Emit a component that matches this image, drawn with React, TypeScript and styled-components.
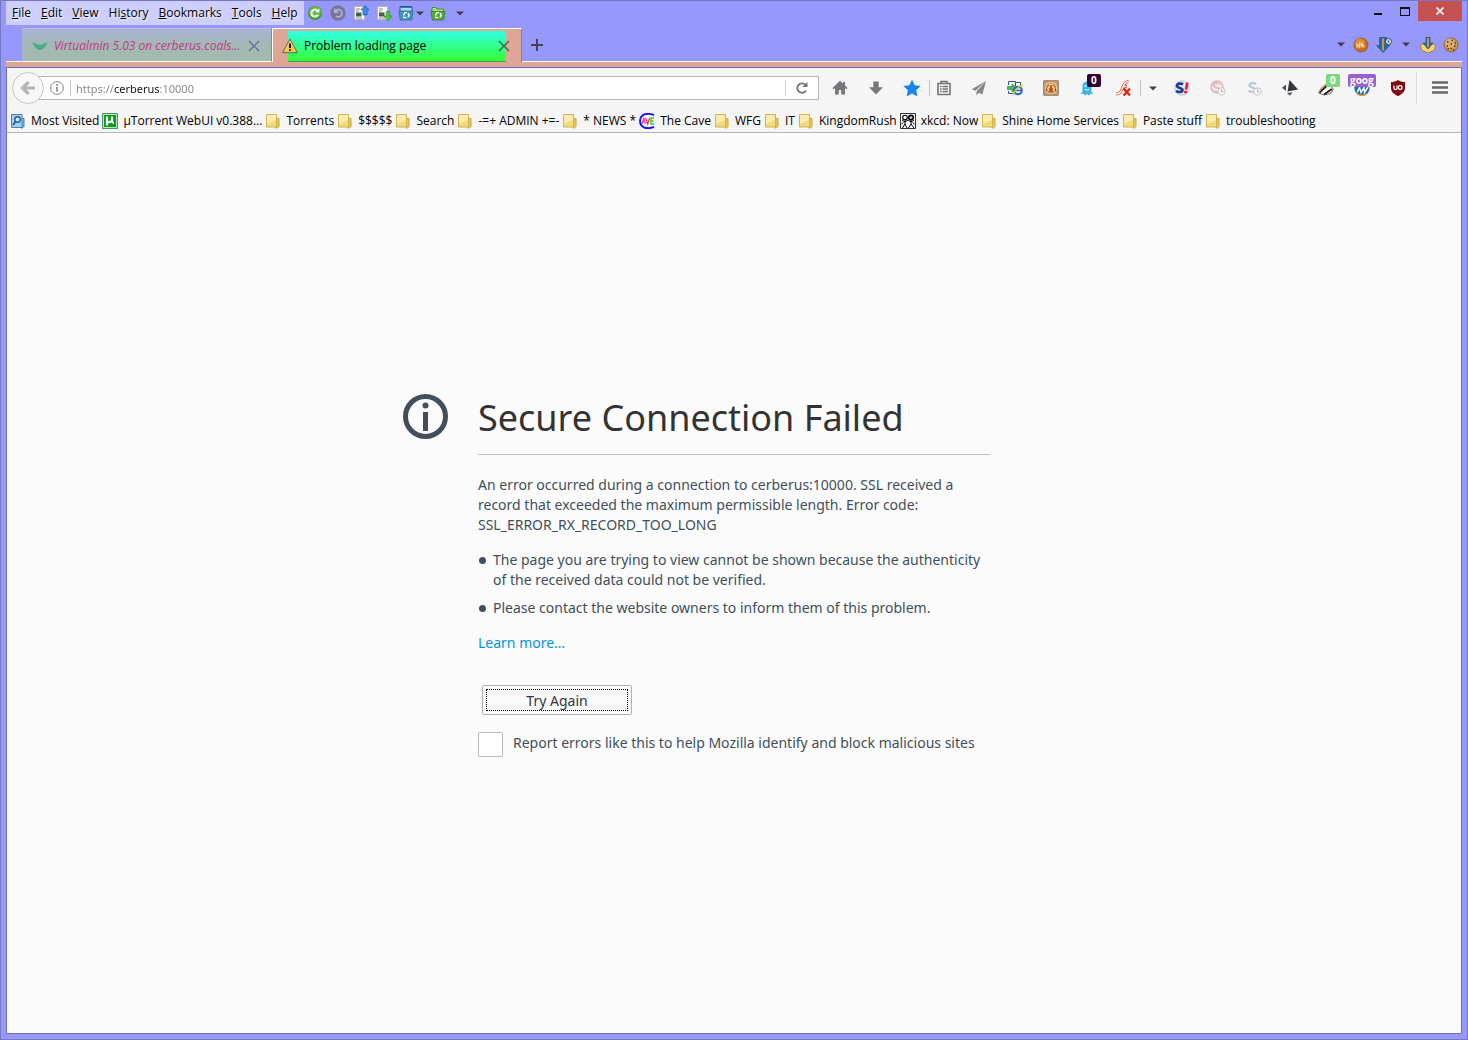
import React from "react";
import styled, { createGlobalStyle } from "styled-components";

const Global = createGlobalStyle`
  * { box-sizing: border-box; }
  html, body { margin: 0; }
  body {
    font-family: "Open Sans", "Noto Sans", sans-serif;
    font-size: 12px;
    line-height: 16px;
    color: #000;
    background: #9698fc;
  }
  button, input { font: inherit; color: inherit; margin: 0; padding: 0; }
  button { border: 0; background: none; cursor: default; }
  svg { display: block; flex: none; }
`;

const Window = styled.div`
  min-height: 100vh;
  display: flex;
  flex-direction: column;
  padding: 0 5px 5px;
  border: 1px solid #7478c0;
  background: #9698fc;
`;

/* ---------- title bar ---------- */

const TitleBar = styled.header`
  display: flex;
  align-items: flex-start;
  height: 27px;
`;

const MenuBar = styled.nav`
  display: flex;
  align-items: center;
  height: 24px;
  padding: 0 1px;
  background: #cdcefb;
`;

const MenuItem = styled.button`
  padding: 0 5px;
  text-shadow: 1px 1px 2px #fff;
`;

const TitleTools = styled.div`
  display: flex;
  align-items: center;
  height: 24px;
  flex: 1;
`;

const Tool = styled.button<{ $w: number }>`
  width: ${(p) => p.$w}px;
  height: 24px;
  display: flex;
  align-items: center;
  justify-content: center;
`;

const Caption = styled.button<{ $close?: boolean }>`
  display: flex;
  align-items: center;
  justify-content: center;
  width: ${(p) => (p.$close ? 44 : 27)}px;
  height: 20px;
  background: ${(p) => (p.$close ? "#c75050" : "transparent")};
`;

/* ---------- tabs ---------- */

const TabStrip = styled.div`
  display: flex;
  align-items: stretch;
  height: 34px;
`;

const StripEdge = styled.div<{ $grow?: boolean }>`
  width: 16px;
  flex: ${(p) => (p.$grow ? "1" : "none")};
  display: flex;
  align-items: center;
  justify-content: ${(p) => (p.$grow ? "flex-end" : "flex-start")};
  border-bottom: 1px solid #fff;
`;

const Tab = styled.div<{ $active?: boolean }>`
  display: flex;
  width: 250px;
  background: ${(p) => (p.$active ? "#dfa595" : "linear-gradient(#aab4d6, #a3b8b4 50%, #a2bbae)")};
  border-top: 1px solid ${(p) => (p.$active ? "#fff" : "#b9bce4")};
  border-left: 1px solid ${(p) => (p.$active ? "#fff" : "#a9b3cf")};
  border-right: 1px solid ${(p) => (p.$active ? "#8a7a90" : "#7f86a8")};
  border-bottom: ${(p) => (p.$active ? "0" : "1px solid #fff")};
  padding: ${(p) => (p.$active ? "2px 15px 0 15px" : "0")};
`;

const TabFace = styled.div<{ $active?: boolean }>`
  flex: 1;
  min-width: 0;
  display: flex;
  align-items: center;
  height: ${(p) => (p.$active ? 31 : 33)}px;
  background: ${(p) => (p.$active ? "linear-gradient(#33ffe8, #33ff33)" : "none")};
  border-bottom: ${(p) => (p.$active ? "1px solid #4a9a5a" : "0")};
`;

const TabIcon = styled.span<{ $active?: boolean }>`
  width: 16px;
  flex: none;
  margin: ${(p) => (p.$active ? "0 6px 0 -6px" : "0 6px 0 9px")};
`;

const TabLabel = styled.span<{ $active?: boolean }>`
  flex: 1;
  white-space: nowrap;
  color: ${(p) => (p.$active ? "#000" : "#c03a86")};
  font-style: ${(p) => (p.$active ? "normal" : "italic")};
`;

const TabClose = styled.button<{ $active?: boolean }>`
  margin-right: ${(p) => (p.$active ? -6 : 9)}px;
`;

const AccentLine = styled.div`
  height: 6px;
  background: #dfa595;
  border-bottom: 1px solid #6a70b0;
`;

/* ---------- navigation ---------- */

const Client = styled.div`
  flex: 1;
  display: flex;
  flex-direction: column;
  background: #fbfbfb;
  border: 1px solid #6a70b0;
  border-top: 0;
`;

const Toolbars = styled.div`
  background: #f5f5f5;
  border-bottom: 1px solid #b6b6b6;
  height: 65px;
`;

const NavBar = styled.div`
  display: flex;
  align-items: center;
  height: 40px;
  padding: 0 3px 0 5px;
`;

const Back = styled.button`
  position: relative;
  z-index: 1;
  flex: none;
  display: flex;
  align-items: center;
  justify-content: center;
  width: 32px;
  height: 32px;
  border-radius: 50%;
  border: 1px solid #c8c8ca;
  background: #f7f7f7;
`;

const UrlBar = styled.div`
  flex: 1;
  display: flex;
  align-items: center;
  height: 24px;
  margin: 0 3px 0 -5px;
  padding-left: 9px;
  background: #fff;
  border: 1px solid #b2b7bd;
`;

const UrlDivider = styled.span`
  width: 1px;
  height: 16px;
  margin: 0 5px;
  background: #c9c9c9;
`;

const UrlInput = styled.input`
  flex: 1;
  min-width: 0;
  border: 0;
  outline: 0;
  height: 20px;
  font-family: "Noto Sans", "Open Sans", sans-serif;
  font-size: 11px;
  color: transparent;
  background: linear-gradient(90deg, #858585 38px, #111 38px, #111 84px, #858585 84px);
  background-clip: text;
  -webkit-background-clip: text;
`;

const Reload = styled.button`
  width: 33px;
  height: 16px;
  display: flex;
  align-items: center;
  justify-content: center;
  border-left: 1px solid #d4d4d4;
`;

const NavButton = styled.button<{ $w?: number; $spaced?: boolean }>`
  position: relative;
  flex: none;
  width: ${(p) => p.$w ?? 36}px;
  height: 32px;
  margin-right: ${(p) => (p.$spaced ? 4 : 0)}px;
  display: flex;
  align-items: center;
  justify-content: center;
`;

const Rule = styled.span<{ $tall?: boolean }>`
  width: 1px;
  flex: none;
  height: ${(p) => (p.$tall ? 32 : 16)}px;
  margin: ${(p) => (p.$tall ? "0 5px 0 0" : "0 0 0 -1px")};
  background: ${(p) => (p.$tall ? "#dcdcdc" : "#c4c4c4")};
`;

const Badge = styled.span<{ $bg: string; $centered?: boolean }>`
  position: absolute;
  top: 2px;
  left: ${(p) => (p.$centered ? "4px" : "50%")};
  padding: 0 ${(p) => (p.$centered ? 2 : 4)}px;
  height: 13px;
  border-radius: 2px;
  background: ${(p) => p.$bg};
  color: #fff;
  font-size: 10px;
  font-weight: 700;
  line-height: 12px;
`;

const Bookmarks = styled.div`
  display: flex;
  align-items: center;
  height: 25px;
  padding-left: 3px;
`;

const Bookmark = styled.button`
  display: flex;
  align-items: center;
  gap: 5px;
  margin-right: 3px;
  white-space: nowrap;
`;

/* ---------- error page ---------- */

const Page = styled.main`
  flex: 1;
  display: grid;
  grid-template-columns: 75px minmax(0, 512px) 75px;
  justify-content: center;
  align-content: center;
  padding-bottom: 16px;
  color: #424f5a;
  font-family: "Noto Sans", "Open Sans", sans-serif;
  font-size: 14px;
  line-height: 20px;
`;

const Title = styled.h1`
  margin: 0 0 20px;
  padding-bottom: 12px;
  border-bottom: 1px solid #c1c1c1;
  color: #333;
  font-size: 36px;
  line-height: 48px;
  font-weight: 400;
  white-space: nowrap;
`;

const Para = styled.p`
  margin: 0 0 15px;
`;

const List = styled.ul`
  margin: 0 0 15px;
  padding-left: 15px;
  list-style: none;
  display: flex;
  flex-direction: column;
  gap: 8px;
`;

const Item = styled.li`
  position: relative;
  &::before {
    content: "";
    position: absolute;
    left: -14px;
    top: 7px;
    width: 7px;
    height: 7px;
    border-radius: 50%;
    background: #424f5a;
  }
`;

const Link = styled.a`
  color: #0095dd;
  text-decoration: none;
`;

const Retry = styled.button`
  display: block;
  width: 150px;
  height: 30px;
  margin: 32px 0 17px 4px;
  padding-top: 2px;
  border: 1px solid #b1b1b1;
  border-radius: 2px;
  background: #fbfbfb;
  color: #333;
  outline: 1px dotted #000;
  outline-offset: -5px;
`;

const Report = styled.label`
  display: flex;
  gap: 10px;
  line-height: 22px;
  white-space: nowrap;
`;

const Check = styled.input`
  appearance: none;
  flex: none;
  width: 25px;
  height: 25px;
  border: 1px solid #b9b9b9;
  border-radius: 2px;
  background: #fff;
`;

/* ---------- drawings ---------- */

const Svg = ({ s = 16, children }: { s?: number; children: React.ReactNode }) => (
  <svg width={s} height={s} viewBox="0 0 16 16" fill="none" aria-hidden="true">{children}</svg>
);

const Caret = () => (
  <svg width="8" height="5" viewBox="0 0 8 5" aria-hidden="true"><path d="M0 0.5h8L4 4.5z" fill="#404048" /></svg>
);

const Folder = () => (
  <Svg>
    <path d="M11 5.500h3v8l-1.500 1.500H11z" fill="#e3c85c" stroke="#c8a840" />
    <path d="M1.500 1.500h10v12.500h-10z" fill="#f1d97c" stroke="#d2b44e" />
    <path d="M2 2h9v5L2 11z" fill="#faecae" />
  </Svg>
);

const MostVisited = () => (
  <Svg>
    <path d="M11 5.500h3v8l-1.500 1.500H11z" fill="#7db4dc" stroke="#4484b4" />
    <path d="M1.500 1.500h10.500v13h-10.500z" fill="#a5d0ec" stroke="#4484b4" />
    <circle cx="7.500" cy="6.500" r="2.700" fill="#d8eefa" stroke="#1f5f98" strokeWidth="1.400" />
    <path d="M5.500 8.500L3 12" stroke="#1f5f98" strokeWidth="1.800" />
  </Svg>
);

const UTorrent = () => (
  <Svg>
    <path d="M0.500 0.500h15v15h-15z" fill="#0a9a20" stroke="#5a8a70" />
    <path d="M1.500 1.500h13v13h-13z" stroke="#e8ffe8" strokeWidth="0.800" />
    <path d="M5 3.500v9M5 8c.5 1.800 4.500 1.800 5-1M10 3.500V8c0 1.500.8 1.700 2 1.500" stroke="#fff" strokeWidth="2.200" />
  </Svg>
);

const Cave = () => (
  <Svg>
    <circle cx="8" cy="8" r="7" fill="#fff" />
    <path d="M15 2.200C12 .5 9 .7 6 1.200 2.500 2.500 1 5 1 8s1.500 5.500 5 6.800c3 .5 6 .7 9-.9" stroke="#1414e8" strokeWidth="1.900" />
    <path d="M3 11l1.800-6 1.800 6M3.700 9h2" stroke="#f030e0" strokeWidth="1.200" />
    <path d="M6.700 5l2 6 2-6" stroke="#f03838" strokeWidth="1.300" />
    <path d="M15 5h-3v6h3M12 8h2.500" stroke="#30c838" strokeWidth="1.300" />
  </Svg>
);

const Xkcd = () => (
  <Svg>
    <path d="M.5.500h15v15H.5z" fill="#fff" stroke="#333" />
    <circle cx="5" cy="4.500" r="2.300" stroke="#000" strokeWidth="1.100" />
    <circle cx="11" cy="4.500" r="2.300" fill="#bbb" stroke="#000" strokeWidth="1.500" />
    <path d="M5 7v4L2.500 15M5 11l2 4M2 7l3 2 3-2 3 2 3-2M11 7v4l-2.500 4M11 11l3 4M1.500 11l2-1.500M14.500 11l-2-1.500" stroke="#000" />
  </Svg>
);

const GreenRefresh = () => (
  <Svg>
    <circle cx="8" cy="8" r="7" fill="#3f9a30" />
    <circle cx="8" cy="7.300" r="6" fill="#66bb48" />
    <path d="M11 9.800A3.500 3.500 0 1 1 10 5.200" stroke="#fff" strokeWidth="1.900" />
    <path d="M8.300 7.300h4V3.300z" fill="#fff" />
  </Svg>
);

const GrayUndo = () => (
  <Svg>
    <circle cx="8" cy="8" r="7.700" fill="#77779a" />
    <path d="M5.500 6A3.600 3.600 0 1 1 6 11" stroke="#b0b0dc" strokeWidth="1.700" />
    <path d="M4 3v5h5z" fill="#b0b0dc" />
  </Svg>
);

const PageArrow = ({ up }: { up?: boolean }) => (
  <Svg>
    <path d="M1.500 1.500h10v13h-10z" fill="#fafafa" stroke="#b4b4bc" />
    <path d="M3 4h4M3 6h3M3 13h6" stroke="#909090" />
    <path d="M3 7.500h5.500v4H3z" fill="#44604a" />
    {up
      ? <path d="M12 .5l4 4.500h-2v5h-4V5H8z" fill="#3c8ce8" stroke="#1e5cae" strokeWidth=".7" />
      : <path d="M12 15.700L8 11h2.300V6.500h3.400V11H16z" fill="#4cc83c" stroke="#2c8a20" strokeWidth=".7" />}
  </Svg>
);

const Recycle = () => (
  <path d="M5.500 10.500l1.300-2.800h2M10 8l1.200 2.500L10 12M8.500 12.700H6L5.200 11.500" stroke="#fff" strokeWidth="1.300" />
);

const WindowBin = () => (
  <Svg>
    <path d="M2 1.500h12v5H2z" fill="#a8daf4" stroke="#1f5c8c" />
    <path d="M2 2h12" stroke="#1f5c8c" strokeWidth="1.500" />
    <path d="M1 6h14l-1.200 9H2.200z" fill="#4496b4" stroke="#2c6c94" strokeWidth=".8" />
    <Recycle />
  </Svg>
);

const FolderBin = () => (
  <Svg>
    <path d="M2 5V2.500h4l1 1.500h6.500V8H2z" fill="#a8dc80" stroke="#3c8c30" strokeWidth=".9" />
    <path d="M1 6.500h14l-1.200 8.500H2.200z" fill="#58a83c" stroke="#3c7c28" strokeWidth=".8" />
    <Recycle />
  </Svg>
);

const GreenWing = () => (
  <Svg><path d="M.5 4.500c3 0 4 2.500 7.500 2.500s4.500-2.500 7.500-2.500C13.500 9 11 12 8 12S2.500 9 .5 4.500z" fill="#46ac88" /></Svg>
);

const Warning = () => (
  <Svg>
    <path d="M8 1.200L15.300 14.500H.7z" fill="#f8c818" stroke="#7a7668" strokeWidth="1.300" strokeLinejoin="round" />
    <path d="M8 3L2.800 13.200h10.400z" stroke="#fff0a0" strokeWidth=".6" />
    <path d="M8 5.500v4.500" stroke="#111" strokeWidth="2" /><circle cx="8" cy="12" r="1.100" fill="#111" />
  </Svg>
);

const Cross = ({ c }: { c: string }) => (
  <Svg><path d="M3 3l10 10M13 3L3 13" stroke={c} strokeWidth="1.200" /></Svg>
);

const Cookie = ({ face }: { face?: boolean }) => (
  <Svg>
    <circle cx="8" cy="8" r="7" fill={face ? "#c06c28" : "#c89a58"} stroke="#8a5420" strokeWidth=".8" />
    <circle cx="7" cy="6.500" r="5" fill={face ? "#dc8c3c" : "#dcb074"} />
    {face
      ? <path d="M4 11.500V7l2.500 3V6L9 9.500V6l2.500 4.500" stroke="#f8d49c" strokeWidth="1.100" />
      : <path d="M4 5h1.500M8.500 3.500H10M7.500 7H9M3.500 9H5M11 9h1.500M7.500 11.500H9M11.500 6H13M4.500 12H6M10 13h1.500" stroke="#5a3010" strokeWidth="1.500" />}
  </Svg>
);

const BlueDown = ({ box }: { box?: boolean }) => (
  <Svg>
    {box && <path d="M0 9l3-2.500L8 9l5-2.500L16 9l-2 4.500L8 16l-6-2.500z" fill="#f4d070" stroke="#96701a" strokeWidth=".8" />}
    <path d={box ? "M6 0h4v6h3L8 12 3 6h3z" : "M3.500.5h7v8h3L7 15.500.5 8.500h3z"} fill="#2c6c9c" stroke="#1c4668" strokeWidth=".6" />
    <path d={box ? "M8 1v9" : "M7 1.500v12"} stroke="#e0a448" strokeWidth="1.600" />
    {!box && <><circle cx="12.500" cy="4.500" r="3" fill="#d8dcec" stroke="#404860" /><circle cx="12.500" cy="4.500" r=".9" fill="#404860" /></>}
  </Svg>
);

const BackArrow = () => (
  <Svg><path d="M8.500 2L2.500 8l6 6M3 8h12" stroke="#b4b4b4" strokeWidth="3.200" /></Svg>
);

const InfoSmall = () => (
  <Svg><circle cx="8" cy="8" r="6.400" stroke="#858585" /><path d="M8 7v4.500" stroke="#858585" strokeWidth="1.700" /><circle cx="8" cy="4.900" r="1" fill="#858585" /></Svg>
);

const ReloadIcon = () => (
  <Svg>
    <path d="M12 10.500A4.700 4.700 0 1 1 11.500 5" stroke="#75767a" strokeWidth="1.900" />
    <path d="M8.500 7h5V2z" fill="#75767a" />
  </Svg>
);

const Home = () => <Svg><path d="M8 .8L.5 8l1.200 1.200L3 8v6.500h3.800V10h2.400v4.500H13V8l1.300 1.200L15.500 8 13 5.600V2h-2v1.700z" fill="#75767a" /></Svg>;
const Down = () => <Svg><path d="M5.300 1.500h5.400v5.700H15L8 14.500 1 7.200h4.300z" fill="#75767a" /></Svg>;
const Star = () => <Svg s={18}><path d="M8 .5l2.300 5.100 5.400.6-4 3.800 1.100 5.500L8 12.800l-4.800 2.700L4.300 10l-4-3.800 5.400-.6z" fill="#1a84ec" /></Svg>;
const Clip = () => (
  <Svg>
    <path d="M2 3.500h12v11H2z" stroke="#75767a" strokeWidth="1.600" />
    <path d="M5 3V1.500h6V3" stroke="#75767a" strokeWidth="1.600" />
    <path d="M4 6.500h1.500M6.500 6.500H12M4 9h1.500M6.500 9H12M4 11.500h1.500M6.500 11.500H12" stroke="#75767a" strokeWidth="1.300" />
  </Svg>
);
const Send = () => <Svg><path d="M15 1L.8 9.200l3.700 1.600zM15 1L5.500 11.500v4l2.300-2.800 3.600 1.800z" fill="#85868a" /></Svg>;
const IeTab = () => (
  <Svg>
    <path d="M1.500 5V1.500h7v5M8.500 2.500h5V6M1.500 11v2.500h5" stroke="#34567c" />
    <path d="M.5 6.500H5V4l4.500 4L5 12V9.500H.5z" fill="#48b858" stroke="#207a30" strokeWidth=".6" />
    <circle cx="11" cy="10.500" r="3.800" fill="#d8f0fc" stroke="#1e6cc0" strokeWidth="2" />
    <path d="M8 10.500h6" stroke="#1e6cc0" strokeWidth="1.300" /><path d="M6.500 15C5 14 12 5 15.500 5.500" stroke="#f0b820" strokeWidth="1.400" />
  </Svg>
);
const Monkey = () => (
  <Svg>
    <path d="M.8.800h14.400v14.400H.8z" fill="#c4a486" stroke="#8c6848" />
    <circle cx="8" cy="8" r="6.200" fill="#e8c490" />
    <circle cx="8" cy="8.300" r="5" fill="#c87430" />
    <path d="M5 11V8l2-2M11 11V8L9 6M6 4.500h4" stroke="#fae4b8" strokeWidth="1.200" />
    <path d="M8 6v6M3.500 9v2M12.500 9v2" stroke="#7c3e14" />
  </Svg>
);
const Ghost = () => (
  <Svg>
    <path d="M3.500 12V6a4.500 4.500 0 0 1 9 0v6l2 2.500-3-.8-1.500 1.800-2-1.500-2 1.500-1.500-1.700L1 14z" fill="#38b4ec" />
    <circle cx="6.500" cy="6" r="1" fill="#fff" /><circle cx="9.800" cy="6" r="1" fill="#fff" /><path d="M6 9c1.500 1.500 3 1.500 4.500 0" stroke="#fff" />
  </Svg>
);
const Flash = () => (
  <Svg>
    <path d="M13.500 1.500C9 1.500 8.500 6 7 9.500 5.500 13 4 14 1 14M7.500 6.700H12" stroke="#e04838" strokeWidth="3" />
    <path d="M13.500 1.500C9 1.500 8.500 6 7 9.500 5.500 13 4 14 1 14M7.500 6.700H11.500" stroke="#fff" strokeWidth="1.300" />
    <path d="M8.500 8.500l6.500 7M15 8.500l-6.500 7" stroke="#e82010" strokeWidth="2.200" />
  </Svg>
);
const SBang = () => (
  <Svg>
    <circle cx="8" cy="8" r="7.200" fill="#e8eaf2" stroke="#c0c4d4" />
    <path d="M9 4.300C7 3 3 3.300 3 5.800s5.500 2 5.500 4.300-4 2.400-6.500.8" stroke="#1c3c94" strokeWidth="2.700" />
    <path d="M13.300 2.500L12 9.500" stroke="#e81c1c" strokeWidth="2.600" /><circle cx="11.500" cy="12" r="1.500" fill="#e81c1c" />
  </Svg>
);
const SFaded = ({ red }: { red?: boolean }) => (
  <Svg>
    {red && <circle cx="7" cy="7" r="6" fill="#faeaea" stroke="#eeb4b4" strokeWidth="1.600" />}
    <path d="M10 4C7 2.500 3.500 3 3.500 5.300S9.500 7.500 9.500 10s-4.500 2.300-7 .8" stroke={red ? "#d4c4cc" : "#bcc4dc"} strokeWidth="2.300" />
    <circle cx="11.500" cy="11.500" r="3.700" fill="#f8f8f8" stroke="#c4c4c4" /><path d="M11.500 9v3h2" stroke="#b0b0b0" />
  </Svg>
);
const Diamond = () => (
  <Svg><path d="M7.500 0L16 9.500 5.500 11.500z" fill="#33363c" /><path d="M4 4.500v6.500L0 7.800zM5 13l5.500-.8L8 15.700z" fill="#4c5056" /></Svg>
);
const Badger = () => (
  <Svg>
    <path d="M.8 13C2 9 6 4.500 10 4l5.500 5-3 4.500L6 15z" fill="#fff" stroke="#444" strokeWidth=".8" />
    <path d="M1.500 12.500L8.500 6M6 14.500L14 9" stroke="#1a1a1a" strokeWidth="1.800" /><path d="M0 13.500L7 5M11 14l4-3.500" stroke="#e89038" />
  </Svg>
);
const Wordmark = () => (
  <Svg>
    <circle cx="8" cy="8" r="7.700" fill="#17749c" />
    <path d="M3 12.500l2.500-5 1.500 5 3-5 .5 5L14 7" stroke="#f4f8fa" strokeWidth="1.500" /><path d="M2.500 13.200c3 3 8 3 11 0" stroke="#e89040" strokeWidth="1.200" />
  </Svg>
);
const Shield = () => (
  <Svg>
    <path d="M8 0c2 1.500 4.500 2 7 2v6c0 4-3.500 6.500-7 8-3.500-1.500-7-4-7-8V2c2.500 0 5-.5 7-2z" fill="#800610" />
    <path d="M4 5.500v2.700c0 1.700 3 1.700 3 0V5.500" stroke="#fff" strokeWidth="1.200" /><circle cx="10.200" cy="7.500" r="1.900" stroke="#fff" strokeWidth="1.200" />
  </Svg>
);
const Burger = () => <Svg><path d="M1 2.500h14M1 7.500h14M1 12.500h14" stroke="#65666c" strokeWidth="2.400" strokeLinecap="square" /></Svg>;

/* ---------- page ---------- */

const menus: [string, string, string][] = [
  ["", "F", "ile"], ["", "E", "dit"], ["", "V", "iew"], ["Hi", "s", "tory"],
  ["", "B", "ookmarks"], ["", "T", "ools"], ["", "H", "elp"],
];

const bookmarks: [React.ReactNode, string][] = [
  [<MostVisited />, "Most Visited"], [<UTorrent />, "µTorrent WebUI v0.388..."], [<Folder />, "Torrents"],
  [<Folder />, "$$$$$"], [<Folder />, "Search"], [<Folder />, "-=+ ADMIN +=-"], [<Folder />, "* NEWS *"],
  [<Cave />, "The Cave"], [<Folder />, "WFG"], [<Folder />, "IT"], [<Folder />, "KingdomRush"],
  [<Xkcd />, "xkcd: Now"], [<Folder />, "Shine Home Services"], [<Folder />, "Paste stuff"], [<Folder />, "troubleshooting"],
];

export default function App() {
  return (
    <>
      <Global />
      <Window>
        <TitleBar>
          <MenuBar>
            {menus.map(([a, k, b]) => <MenuItem key={k}>{a}<u>{k}</u>{b}</MenuItem>)}
          </MenuBar>
          <TitleTools>
            <Tool $w={23} aria-label="Refresh"><GreenRefresh /></Tool>
            <Tool $w={23} aria-label="Undo"><GrayUndo /></Tool>
            <Tool $w={23} aria-label="Export"><PageArrow up /></Tool>
            <Tool $w={23} aria-label="Import"><PageArrow /></Tool>
            <Tool $w={20} aria-label="Closed tabs"><WindowBin /></Tool>
            <Tool $w={8} aria-label="Closed tabs list"><Caret /></Tool>
            <Tool $w={28} aria-label="Closed windows"><FolderBin /></Tool>
            <Tool $w={16} aria-label="More"><Caret /></Tool>
          </TitleTools>
          <Caption aria-label="Minimize"><svg width="8" height="8" viewBox="0 0 8 8"><path d="M0 7h8" stroke="#111" strokeWidth="2" /></svg></Caption>
          <Caption aria-label="Maximize"><svg width="10" height="9" viewBox="0 0 10 9"><path d="M0 0h10v9H0zM1 2v6h8V2z" fill="#111" fillRule="evenodd" /></svg></Caption>
          <Caption $close aria-label="Close"><svg width="8" height="8" viewBox="0 0 8 8"><path d="M.5.500l7 7M7.500.500l-7 7" stroke="#fff" strokeWidth="1.600" /></svg></Caption>
        </TitleBar>

        <TabStrip>
          <StripEdge />
          <Tab>
            <TabFace>
              <TabIcon><GreenWing /></TabIcon>
              <TabLabel>Virtualmin 5.03 on cerberus.coals...</TabLabel>
              <TabClose aria-label="Close tab"><Cross c="#5a6a9a" /></TabClose>
            </TabFace>
          </Tab>
          <Tab $active>
            <TabFace $active>
              <TabIcon $active><Warning /></TabIcon>
              <TabLabel $active>Problem loading page</TabLabel>
              <TabClose $active aria-label="Close tab"><Cross c="#38584a" /></TabClose>
            </TabFace>
          </Tab>
          <StripEdge $grow>
            <Tool $w={30} aria-label="New tab"><Svg><path d="M8 2v12M2 8h12" stroke="#44444c" strokeWidth="2" /></Svg></Tool>
            <TitleTools />
            <Tool $w={18} aria-label="List tabs"><Caret /></Tool>
            <Tool $w={22} aria-label="Cookies"><Cookie face /></Tool>
            <Tool $w={24} aria-label="Downloads"><BlueDown /></Tool>
            <Tool $w={20} aria-label="Download options"><Caret /></Tool>
            <Tool $w={24} aria-label="Extract"><BlueDown box /></Tool>
            <Tool $w={22} aria-label="Cookie manager"><Cookie /></Tool>
          </StripEdge>
        </TabStrip>
        <AccentLine />

        <Client>
          <Toolbars>
            <NavBar>
              <Back aria-label="Back"><BackArrow /></Back>
              <UrlBar>
                <InfoSmall />
                <UrlDivider />
                <UrlInput aria-label="Address" defaultValue="https://cerberus:10000" />
                <Reload aria-label="Reload"><ReloadIcon /></Reload>
              </UrlBar>
              <NavButton aria-label="Home"><Home /></NavButton>
              <NavButton aria-label="Downloads"><Down /></NavButton>
              <NavButton aria-label="Bookmark"><Star /></NavButton>
              <Rule />
              <NavButton $w={27} $spaced aria-label="Bookmarks menu"><Clip /></NavButton>
              <NavButton aria-label="Send"><Send /></NavButton>
              <NavButton aria-label="IE Tab"><IeTab /></NavButton>
              <NavButton aria-label="Greasemonkey"><Monkey /></NavButton>
              <NavButton aria-label="Ghostery"><Ghost /><Badge $bg="#330033">0</Badge></NavButton>
              <NavButton aria-label="Flash block"><Flash /></NavButton>
              <Rule />
              <NavButton $w={23} aria-label="Flash options"><Caret /></NavButton>
              <NavButton aria-label="Stylish"><SBang /></NavButton>
              <NavButton aria-label="Session off"><SFaded red /></NavButton>
              <NavButton aria-label="Session"><SFaded /></NavButton>
              <NavButton aria-label="Rotate"><Diamond /></NavButton>
              <NavButton aria-label="Privacy Badger"><Badger /><Badge $bg="#7fd87f">0</Badge></NavButton>
              <NavButton aria-label="Search words"><Wordmark /><Badge $bg="#9a5fd0" $centered>goog</Badge></NavButton>
              <NavButton aria-label="uBlock"><Shield /></NavButton>
              <Rule $tall />
              <NavButton aria-label="Open menu"><Burger /></NavButton>
            </NavBar>
            <Bookmarks>
              {bookmarks.map(([icon, label]) => <Bookmark key={label}>{icon}{label}</Bookmark>)}
            </Bookmarks>
          </Toolbars>

          <Page>
            <svg width="46" height="46" viewBox="0 0 46 46" fill="none" aria-hidden="true">
              <circle cx="22.500" cy="22.500" r="20" stroke="#424f5a" strokeWidth="5" />
              <circle cx="22.500" cy="11.500" r="3" fill="#424f5a" />
              <path d="M22.500 18v19" stroke="#424f5a" strokeWidth="5" />
            </svg>
            <div>
              <Title>Secure Connection Failed</Title>
              <Para>
                An error occurred during a connection to cerberus:10000. SSL received a<br />
                record that exceeded the maximum permissible length. Error code:<br />
                SSL_ERROR_RX_RECORD_TOO_LONG
              </Para>
              <List>
                <Item>The page you are trying to view cannot be shown because the authenticity<br />of the received data could not be verified.</Item>
                <Item>Please contact the website owners to inform them of this problem.</Item>
              </List>
              <Link href="#">Learn more…</Link>
              <Retry>Try Again</Retry>
              <Report><Check type="checkbox" />Report errors like this to help Mozilla identify and block malicious sites</Report>
            </div>
          </Page>
        </Client>
      </Window>
    </>
  );
}
